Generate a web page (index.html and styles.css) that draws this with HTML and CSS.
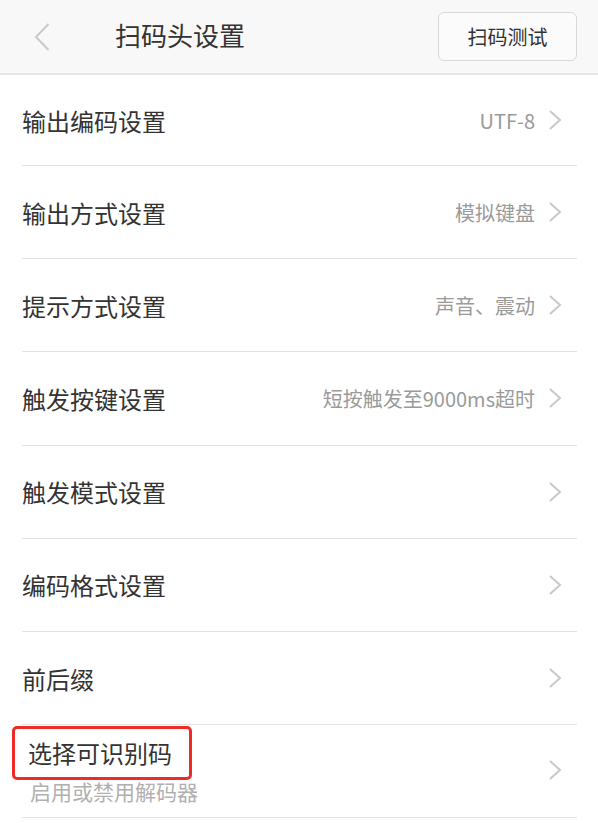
FILE: index.html
```html
<!DOCTYPE html>
<html lang="zh-CN">
<head>
  <meta charset="UTF-8">
  <title>扫码头设置</title>
  <link rel="stylesheet" href="styles.css">
</head>
<body>

  <header class="topbar">
    <svg class="back" width="16" height="28" viewBox="0 0 16 28">
      <polyline points="14.5,1 2,14 14.5,27" fill="none" stroke="#c9c9c9" stroke-width="2"/>
    </svg>
    <h1 class="title">扫码头设置</h1>
    <button class="test-btn" type="button">扫码测试</button>
  </header>

  <ul class="settings">
    <li class="row">
      <span class="label">输出编码设置</span>
      <span class="value">UTF-8</span>
      <svg class="arrow" width="14" height="20" viewBox="0 0 14 20"><polyline points="2,1 12,10 2,19" fill="none" stroke="#c8c8c8" stroke-width="2"/></svg>
    </li>
    <li class="row">
      <span class="label">输出方式设置</span>
      <span class="value">模拟键盘</span>
      <svg class="arrow" width="14" height="20" viewBox="0 0 14 20"><polyline points="2,1 12,10 2,19" fill="none" stroke="#c8c8c8" stroke-width="2"/></svg>
    </li>
    <li class="row">
      <span class="label">提示方式设置</span>
      <span class="value">声音、震动</span>
      <svg class="arrow" width="14" height="20" viewBox="0 0 14 20"><polyline points="2,1 12,10 2,19" fill="none" stroke="#c8c8c8" stroke-width="2"/></svg>
    </li>
    <li class="row">
      <span class="label">触发按键设置</span>
      <span class="value">短按触发至9000ms超时</span>
      <svg class="arrow" width="14" height="20" viewBox="0 0 14 20"><polyline points="2,1 12,10 2,19" fill="none" stroke="#c8c8c8" stroke-width="2"/></svg>
    </li>
    <li class="row">
      <span class="label">触发模式设置</span>
      <svg class="arrow" width="14" height="20" viewBox="0 0 14 20"><polyline points="2,1 12,10 2,19" fill="none" stroke="#c8c8c8" stroke-width="2"/></svg>
    </li>
    <li class="row">
      <span class="label">编码格式设置</span>
      <svg class="arrow" width="14" height="20" viewBox="0 0 14 20"><polyline points="2,1 12,10 2,19" fill="none" stroke="#c8c8c8" stroke-width="2"/></svg>
    </li>
    <li class="row">
      <span class="label">前后缀</span>
      <svg class="arrow" width="14" height="20" viewBox="0 0 14 20"><polyline points="2,1 12,10 2,19" fill="none" stroke="#c8c8c8" stroke-width="2"/></svg>
    </li>
    <li class="row row-sub">
      <div class="stack">
        <span class="label marked">选择可识别码</span>
        <span class="sub">启用或禁用解码器</span>
      </div>
      <svg class="arrow" width="14" height="20" viewBox="0 0 14 20"><polyline points="2,1 12,10 2,19" fill="none" stroke="#c8c8c8" stroke-width="2"/></svg>
    </li>
  </ul>

</body>
</html>
```

FILE: styles.css
```css
body {
  margin: 0;
  background: #fff;
  font-family: "Noto Sans CJK SC", "Noto Sans", sans-serif;
  color: #333;
}

.topbar {
  display: flex;
  align-items: center;
  height: 73px;
  padding: 0 21px 0 34px;
  background: #f8f8f8;
  border-bottom: 2px solid #e6e6e6;
}

.back {
  display: block;
  margin-top: 1px;
}

.title {
  margin: 0 0 3px 65px;
  font-size: 26px;
  font-weight: normal;
  color: #333;
  line-height: 1;
}

.test-btn {
  margin-left: auto;
  width: 139px;
  height: 49px;
  background: #fbfbfb;
  border: 1px solid #d8d8d8;
  border-radius: 6px;
  font-family: inherit;
  font-size: 20px;
  color: #333;
  padding: 0;
}

.settings {
  list-style: none;
  margin: 0;
  padding: 0;
}

.row {
  display: flex;
  align-items: center;
  height: 93.2px;
  box-sizing: border-box;
  margin: 0 21px 0 22px;
  padding-right: 15px;
  border-bottom: 1px solid #e2e2e2;
}

.row:first-child {
  height: 91px;
}

.label {
  font-size: 24px;
  color: #333;
}

.value {
  margin-left: auto;
  margin-right: 13px;
  font-size: 20px;
  color: #9a9a9a;
}

.arrow {
  display: block;
  margin-left: auto;
  flex-shrink: 0;
}

.value + .arrow {
  margin-left: 0;
}

.row-sub {
  align-items: flex-start;
}

.row-sub .arrow {
  margin-top: 35px;
}

.stack {
  display: flex;
  flex-direction: column;
  align-items: flex-start;
  padding-top: 1px;
}

.marked {
  margin-left: -10px;
  padding: 0 17px 0 13px;
  line-height: 48px;
  border: 3px solid #ee2b24;
  border-radius: 5px;
}

.sub {
  margin-left: 8px;
  font-size: 21px;
  line-height: 22px;
  color: #b0b0b0;
}
```
